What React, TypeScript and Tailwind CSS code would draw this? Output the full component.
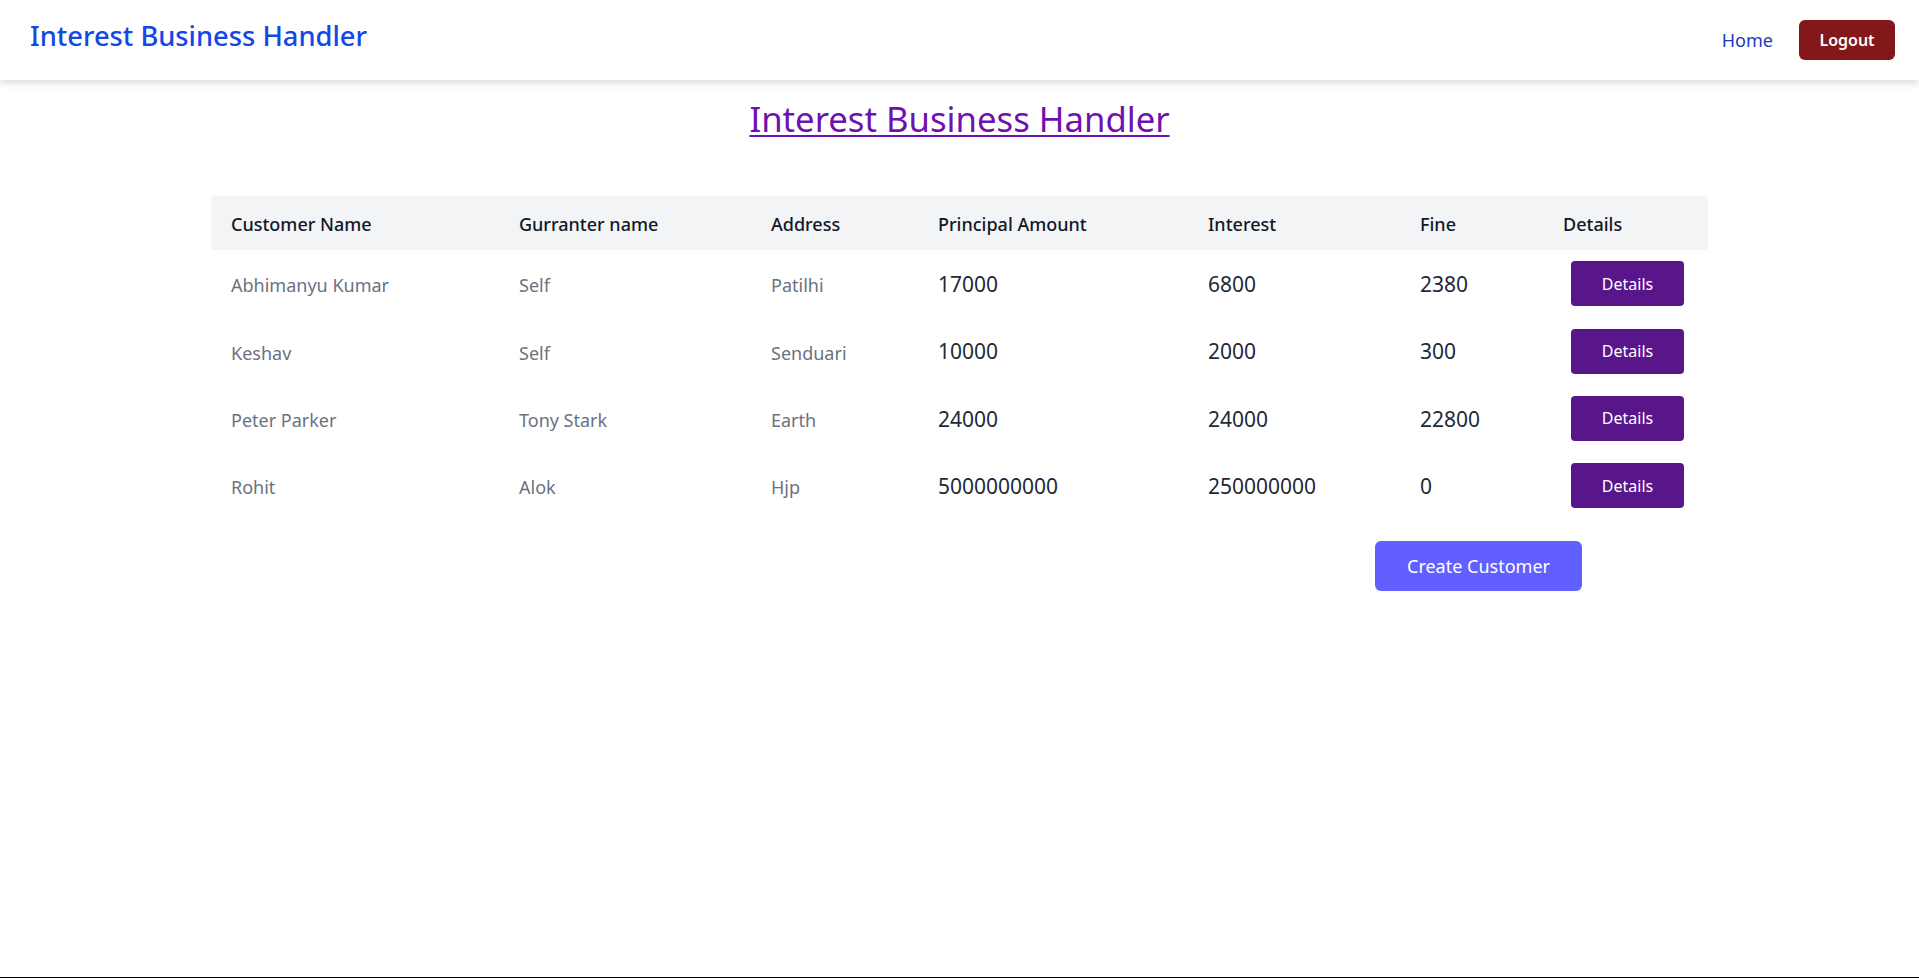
const customers = [
  { id: 1, name: 'Abhimanyu Kumar', gurranter: 'Self', address: 'Patilhi', principal: 17000, interest: 6800, fine: 2380 },
  { id: 2, name: 'Keshav', gurranter: 'Self', address: 'Senduari', principal: 10000, interest: 2000, fine: 300 },
  { id: 3, name: 'Peter Parker', gurranter: 'Tony Stark', address: 'Earth', principal: 24000, interest: 24000, fine: 22800 },
  { id: 4, name: 'Rohit', gurranter: 'Alok', address: 'Hjp', principal: 5000000000, interest: 250000000, fine: 0 },
]

function Navbar(){
  return (
    <nav className="h-20 bg-white shadow-[0_3px_8px_rgba(0,0,0,0.15)] flex items-center justify-between pl-[30px] pr-6 relative z-10">
      <a className="text-[27.3px] font-medium text-blue-700 mb-2">Interest Business Handler</a>
      <div className="flex items-center gap-[26px]">
        <a className="text-lg text-blue-800 leading-7">Home</a>
        <button className="w-24 h-10 rounded-md bg-red-900 text-white text-base font-semibold">Logout</button>
      </div>
    </nav>
  )
}

export default function App(){
  return (
    <div className="min-h-screen bg-white border-b border-black font-['Noto_Sans',sans-serif]">
      <Navbar />

      {/* page heading */}
      <h1 className="mt-[15px] text-center text-[34.7px] leading-[48px] text-purple-800 underline underline-offset-[3px] decoration-2">
        Interest Business Handler
      </h1>

      <table className="mt-[53px] mx-auto w-[1497px] table-fixed text-left">
        <thead>
          <tr className="text-lg text-gray-900">
            <th className="w-[288px] px-5 pt-[15px] pb-[13px] leading-[26px] font-medium bg-gray-100 rounded-l">Customer Name</th>
            <th className="w-[252px] px-5 pt-[15px] pb-[13px] leading-[26px] font-medium bg-gray-100">Gurranter name</th>
            <th className="w-[167px] px-5 pt-[15px] pb-[13px] leading-[26px] font-medium bg-gray-100">Address</th>
            <th className="w-[270px] px-5 pt-[15px] pb-[13px] leading-[26px] font-medium bg-gray-100">Principal Amount</th>
            <th className="w-[212px] px-5 pt-[15px] pb-[13px] leading-[26px] font-medium bg-gray-100">Interest</th>
            <th className="w-[143px] px-5 pt-[15px] pb-[13px] leading-[26px] font-medium bg-gray-100">Fine</th>
            <th className="w-[165px] px-5 pt-[15px] pb-[13px] leading-[26px] font-medium bg-gray-100 rounded-r">Details</th>
          </tr>
        </thead>
        <tbody>
          {customers.map(c=>(
            <tr key={c.id} className="h-[67.4px]">
              <td className="px-5 pt-[3px] text-lg text-gray-500">{c.name}</td>
              <td className="px-5 pt-[3px] text-lg text-gray-500">{c.gurranter}</td>
              <td className="px-5 pt-[3px] text-lg text-gray-500">{c.address}</td>
              <td className="px-5 pt-[2px] text-[21px] text-gray-800">{c.principal}</td>
              <td className="px-5 pt-[2px] text-[21px] text-gray-800">{c.interest}</td>
              <td className="px-5 pt-[2px] text-[21px] text-gray-800">{c.fine}</td>
              <td className="px-5">
                <button className="ml-2 w-[113px] h-[45px] rounded bg-purple-900 text-white text-base">Details</button>
              </td>
            </tr>
          ))}
        </tbody>
      </table>

      <div className="mx-auto w-[1497px] flex justify-end pr-[126px] mt-[21px]">
        <button className="w-[207px] h-[50px] rounded-md bg-indigo-500 text-white text-lg">Create Customer</button>
      </div>
    </div>
  )
}
